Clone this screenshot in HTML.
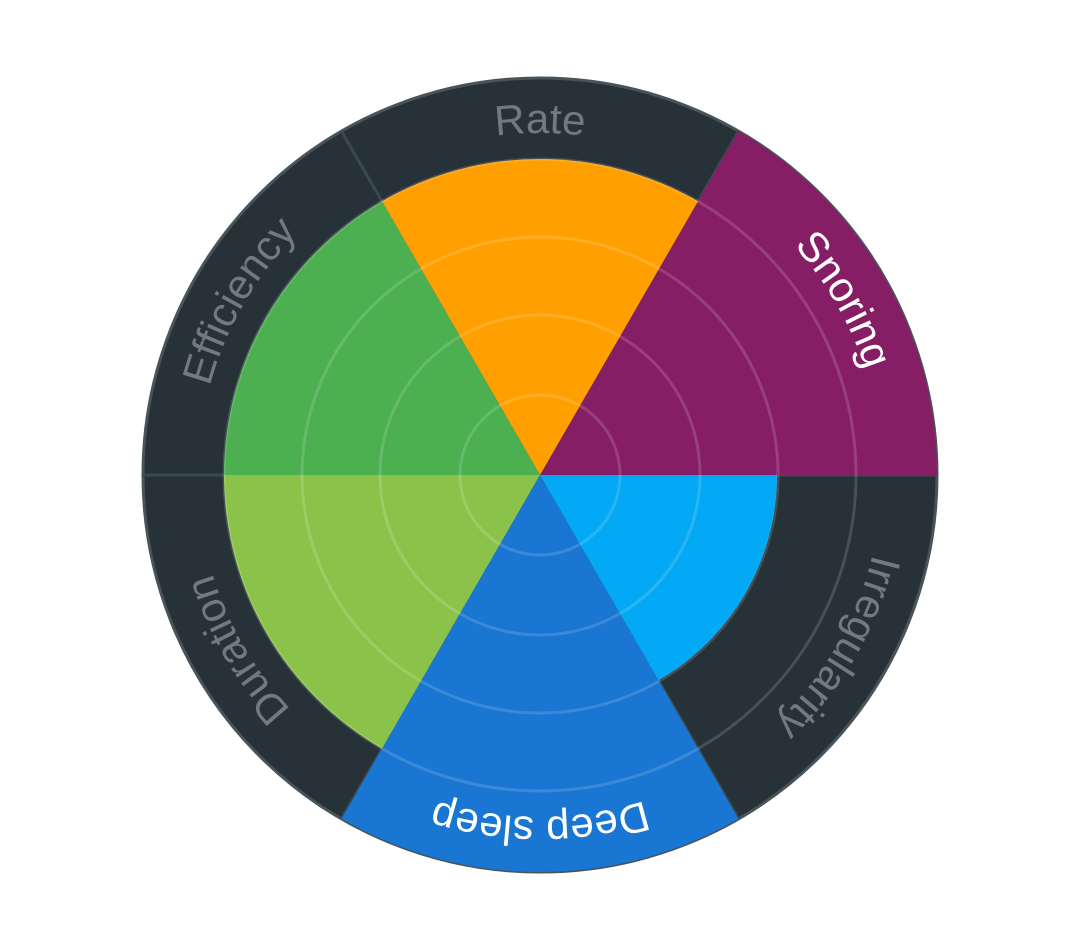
<!DOCTYPE html>
<html><head><meta charset="utf-8"><style>
html,body{margin:0;padding:0;background:#fff;width:1080px;height:948px;overflow:hidden}
svg{display:block}
text{font-family:"Liberation Sans",sans-serif;font-size:42px}
</style></head><body>
<svg width="1080" height="948" viewBox="0 0 1080 948">
<defs>
<path id="lp" d="M 198,475 A 342 342 0 1 1 882,475 A 342 342 0 1 1 198,475 A 342 342 0 1 1 882,475 A 342 342 0 1 1 198,475"/>
</defs>
<circle cx="540" cy="475" r="397" fill="#263238" stroke="#48545a" stroke-width="3"/>
<g stroke="#3c484f" stroke-width="3">
<line x1="540" y1="475" x2="937" y2="475"/>
<line x1="540" y1="475" x2="143" y2="475"/>
<line x1="540" y1="475" x2="738.5" y2="131.2"/>
<line x1="540" y1="475" x2="341.5" y2="131.2"/>
<line x1="540" y1="475" x2="738.5" y2="818.8"/>
<line x1="540" y1="475" x2="341.5" y2="818.8"/>
</g>
<path d="M540,475 L738.5,131.2 A397 397 0 0 1 937,475 Z" fill="#861e66"/>
<path d="M540,475 L382,201.3 A316 316 0 0 1 698,201.3 Z" fill="#ffa000"/>
<path d="M540,475 L224,475 A316 316 0 0 1 382,201.3 Z" fill="#4caf50"/>
<path d="M540,475 L382,748.7 A316 316 0 0 1 224,475 Z" fill="#8bc34a"/>
<path d="M540,475 L738.5,818.8 A397 397 0 0 1 341.5,818.8 Z" fill="#1976d2"/>
<path d="M540,475 L777,475 A237 237 0 0 1 658.5,680.2 Z" fill="#03a9f4"/>
<g fill="none" stroke="#ffffff" stroke-opacity="0.15" stroke-width="3">
<circle cx="540" cy="475" r="80"/>
<circle cx="540" cy="475" r="160"/>
<circle cx="540" cy="475" r="238"/>
<circle cx="540" cy="475" r="316"/>
</g>
<g text-anchor="middle">
<text fill="#6f7b80"><textPath href="#lp" startOffset="179">Efficiency</textPath></text>
<text fill="#6f7b80"><textPath href="#lp" startOffset="537">Rate</textPath></text>
<text fill="#ffffff"><textPath href="#lp" startOffset="895">Snoring</textPath></text>
<text fill="#6f7b80"><textPath href="#lp" startOffset="1253">Irregularity</textPath></text>
<text fill="#ffffff"><textPath href="#lp" startOffset="1611">Deep sleep</textPath></text>
<text fill="#6f7b80"><textPath href="#lp" startOffset="1969">Duration</textPath></text>
</g>
</svg>
</body></html>
